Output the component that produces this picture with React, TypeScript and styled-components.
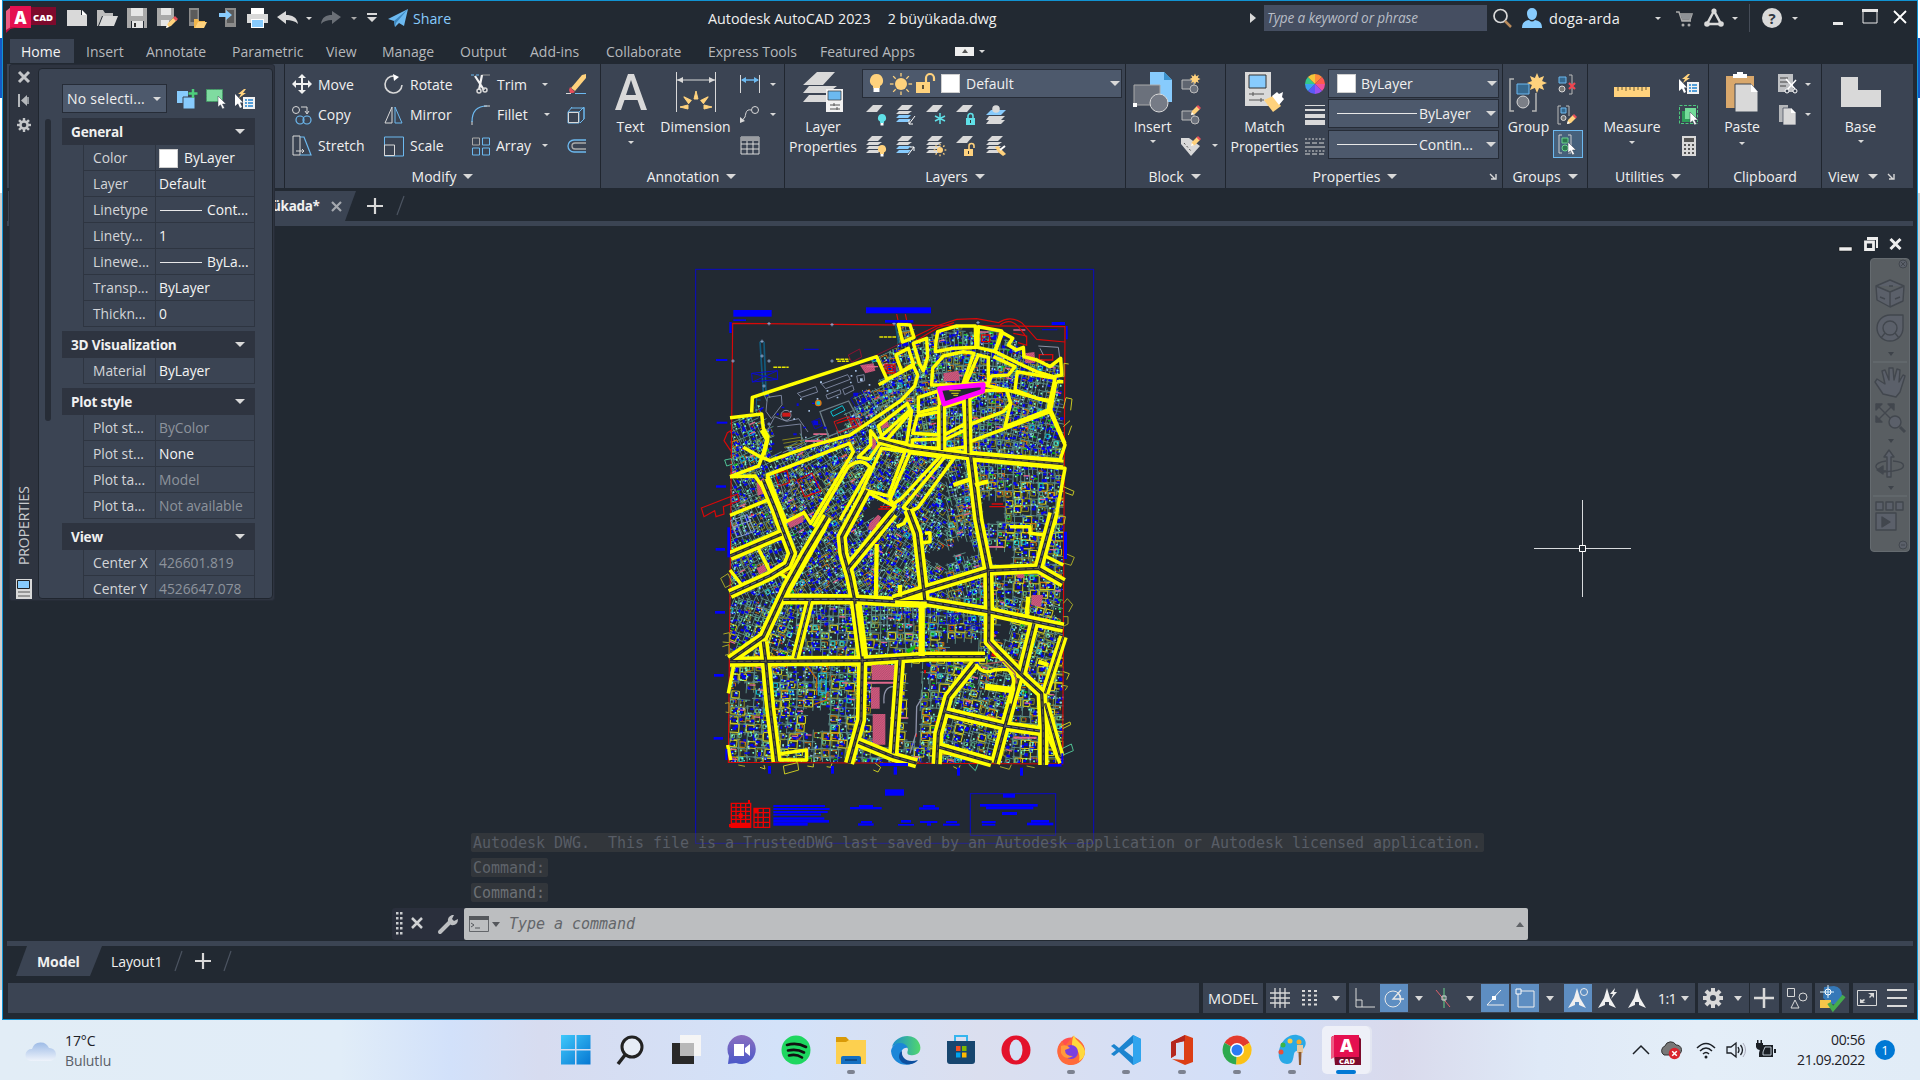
import React from "react";
import styled, { createGlobalStyle, css } from "styled-components";

const ui = `"Open Sans", "Noto Sans", sans-serif`;
const mono = `"DejaVu Sans Mono", "Liberation Mono", monospace`;
const c = {
  dark: "#222932",
  panel: "#3b4453",
  field: "#4d596c",
  line: "#262c37",
  frame: "#2e3440",
  icon: "#d9d9d9",
  blue: "#87cbfd",
  sky: "#6cb9f0",
  gold: "#ffd27d",
  red: "#e84e5a",
  green: "#6bd38e",
};

const Global = createGlobalStyle`
  * { box-sizing: border-box; }
  html, body { margin: 0; padding: 0; overflow: hidden; background: #222932; }
  body { font-family: ${ui}; font-size: 14px; color: #f0f0f0; }
`;

/* ---------- shared pieces ---------- */

const Screen = styled.div`
  width: 1920px;
  height: 1080px;
  display: flex;
  flex-direction: column;
  overflow: hidden;
  white-space: nowrap;
`;
const Desk = styled.div`
  height: 1020px;
  padding: 0 2px 0 2px;
  background: linear-gradient(#fff 0 38px, #1559c4 38px 98px, #fff 98px 193px, #cfcfcf 193px 990px, #eef3f9 990px);
`;
const Window = styled.div`
  position: relative;
  height: 1020px;
  border: 1px solid #1193d3;
  background: ${c.dark};
  display: flex;
  flex-direction: column;
  padding: 0 4px;
`;
const Pic = styled.svg<{ $w: number; $h: number; $ml?: number }>`
  display: block;
  flex: none;
  width: ${(p) => p.$w}px;
  height: ${(p) => p.$h}px;
  margin-left: ${(p) => p.$ml ?? 0}px;
  overflow: visible;
`;
type IconProps = { s?: number; w?: number; h?: number; ml?: number; vb?: string; children?: React.ReactNode };
const Icon = ({ s = 20, w, h, ml, vb, children }: IconProps) => (
  <Pic $w={w ?? s} $h={h ?? s} $ml={ml} viewBox={vb ?? `0 0 ${w ?? s} ${h ?? s}`} fill="none">
    {children}
  </Pic>
);
const Caret = styled.i<{ $w?: number; $ml?: number; $mt?: number; $c?: string; $up?: boolean }>`
  display: block;
  flex: none;
  width: 0;
  height: 0;
  margin-left: ${(p) => p.$ml ?? 0}px;
  margin-top: ${(p) => p.$mt ?? 0}px;
  border-left: ${(p) => (p.$w ?? 7) / 2}px solid transparent;
  border-right: ${(p) => (p.$w ?? 7) / 2}px solid transparent;
  ${(p) =>
    p.$up
      ? css`border-bottom: ${(p.$w ?? 7) * 0.58}px solid ${p.$c ?? c.icon};`
      : css`border-top: ${(p.$w ?? 7) * 0.58}px solid ${p.$c ?? c.icon};`}
`;

/* ---------- title bar ---------- */

const TitleBar = styled.header`
  height: 37px;
  display: flex;
  align-items: center;
  padding-bottom: 3px;
  flex: none;
`;
const Logo = styled.div`
  width: 51px;
  height: 28px;
  margin: 2px 0 0 -1px;
  flex: none;
`;
const QuickBar = styled.div`
  display: flex;
  align-items: center;
  width: 651px;
  flex: none;
`;
const ShareText = styled.span`
  color: ${c.blue};
  font-size: 14.2px;
  margin-left: 5px;
`;
const Caption = styled.div`
  display: flex;
  gap: 17px;
  width: 540px;
  font-size: 14.3px;
`;
const Search = styled.div`
  width: 223px;
  height: 26px;
  margin-left: 8px;
  padding-left: 3px;
  background: #454e61;
  font-style: italic;
  font-size: 13.6px;
  letter-spacing: -0.14px;
  line-height: 25px;
  color: #b8bdc6;
`;
const User = styled.span`
  margin-left: 7px;
  width: 106px;
  font-size: 14.5px;
  letter-spacing: 0.2px;
`;
const Rule = styled.i`
  width: 1px;
  height: 28px;
  background: #454c58;
  margin-left: 11px;
`;

const Title = () => (
  <TitleBar>
    <Logo>
      <Icon w={51} h={28}>
        <path d="M5 2h45v18H24z" fill="#7d0a2c" />
        <path d="M0 6l5-4v21l-5 4z" fill="#ee5c83" />
        <path d="M4 1h21v22H4z" fill="#e51050" />
        <path d="M0 25l5-3h8L4 24l-4 4z" fill="#c00c44" />
        <text x="14.5" y="19" fontSize="17" fontWeight="800" fill="#fff" textAnchor="middle" fontFamily="Open Sans">A</text>
        <text x="37" y="15.5" fontSize="9.5" fontWeight="800" fill="#fff" textAnchor="middle" fontFamily="Open Sans">CAD</text>
      </Icon>
    </Logo>
    <QuickBar>
      <Icon w={20} h={18} ml={10}><path d="M0 1h14v5h6v11H0z" fill={c.icon} /><path d="M15 1l5 5h-5z" fill="#fff" /></Icon>
      <Icon w={21} h={18} ml={10}><path d="M0 17V1h6l2 3h8v3H5L1 17z" fill="#bdbdbd" /><path d="M2 17L6 7h15l-4 10z" fill={c.icon} /></Icon>
      <Icon s={20} ml={9}><path d="M0 0h4v8h12V0h4v20h-3v-7H4v7H0z" fill="#a9a9a9" /><path d="M4 0h12v8H4zM5 13h11v7H5z" fill="#e6e6e6" /><path d="M7 15h2v4H7z" fill="#333" /></Icon>
      <Icon s={20} ml={10}><path d="M0 0h4v7h10V0h3v9L8 18H0z" fill="#a9a9a9" /><path d="M4 0h10v7H4zM4 12h8v6H4z" fill="#e6e6e6" /><path d="M9 20l2-5 6-6 3 3-6 6z" fill={c.gold} /><path d="M16 10l2-2 3 3-2 2z" fill={c.red} /><path d="M9 20l1-3 2 2z" fill="#fff" /></Icon>
      <Icon s={20} ml={10}><path d="M2 0h10v18H2z" fill="#8b8b8b" /><path d="M3.500 2h7v12h-7z" fill="#5b5b5b" /><path d="M7 20v-9h4l1 2h6v2l-3 5z" fill="#f0b64d" /><path d="M8 20l3-6h9l-3 6z" fill={c.gold} /></Icon>
      <Icon s={20} ml={12}><path d="M6 0h11v19H6z" fill="#8b8b8b" /><path d="M8 2h7v13H8z" fill="#5b5b5b" /><path d="M0 5h7V2l6 5-6 5V9H0z" fill={c.blue} /></Icon>
      <Icon w={21} h={20} ml={8}><path d="M4 0h13v6H4z" fill="#fff" /><path d="M0 6h21v9H0z" fill={c.icon} /><path d="M4 11h13v9H4z" fill="#fff" /><path d="M5 12h11v7H5z" fill={c.blue} /></Icon>
      <Icon w={21} h={14} ml={9}><path d="M0 6l9-6v4c6 0 11 2 12 9-3-3-7-4-12-4v4z" fill={c.icon} /></Icon>
      <Caret $ml={8} $w={6} />
      <Icon w={20} h={14} ml={9}><path d="M20 6l-9-6v4C5 4 1 6 0 13c3-3 6-4 11-4v4z" fill="#6a6f76" /></Icon>
      <Caret $ml={10} $w={6} $c="#aaa" />
      <Icon w={10} h={10} ml={10}><path d="M0 0h10v2H0zM0 4h10l-5 5z" fill={c.icon} /></Icon>
      <Icon w={20} h={18} ml={11}><path d="M0 10L20 0l-4 17-5-3-4 4-1-6z" fill={c.sky} /><path d="M6 12L20 0 8 14l-1 4z" fill="#3c86be" /></Icon>
      <ShareText>Share</ShareText>
    </QuickBar>
    <Caption><span>Autodesk AutoCAD 2023</span><span>2 büyükada.dwg</span></Caption>
    <Icon w={6} h={10} ml={2}><path d="M0 0l6 5-6 5z" fill={c.icon} /></Icon>
    <Search>Type a keyword or phrase</Search>
    <Icon s={20} ml={6}><circle cx="7.500" cy="8" r="6.500" stroke={c.icon} strokeWidth="1.700" /><path d="M12 13l6 6" stroke="#b98b5c" strokeWidth="2.500" /></Icon>
    <Icon s={20} ml={9}><path d="M5 5a5 5 0 0 1 10 0c0 4-2 7-5 7s-5-3-5-7zM0 20c0-5 2-7 7-8 2 2 4 2 6 0 5 1 7 3 7 8z" fill={c.blue} /></Icon>
    <User>doga-arda</User>
    <Caret $w={6} />
    <Icon s={17} ml={15}><path d="M0 2h3l3 9h9M4 4h12l-2 6H6" stroke="#aaa" strokeWidth="1.500" /><path d="M4 4h12l-2 5H6z" fill="#8f9296" /><circle cx="7" cy="15" r="1.500" fill="#aaa" /><circle cx="13" cy="15" r="1.500" fill="#aaa" /></Icon>
    <Icon s={20} ml={11}><path d="M10 3L3 16h14z" stroke={c.icon} strokeWidth="2.500" /><circle cx="10" cy="3" r="2.600" fill={c.icon} /><circle cx="3" cy="16" r="2.800" fill={c.icon} /><circle cx="17" cy="16" r="2.800" fill={c.icon} /></Icon>
    <Caret $w={6} $ml={8} />
    <Rule />
    <Icon s={20} ml={12}><circle cx="10" cy="10" r="10" fill={c.icon} /><text x="10" y="15.500" fontSize="15" fontWeight="700" fill="#30363f" textAnchor="middle" fontFamily="Open Sans">?</text></Icon>
    <Caret $w={6} $ml={10} />
    <Icon w={11} h={16} ml={35}><path d="M0 12h10v3H0z" fill="#e8e8e8" /></Icon>
    <Icon w={16} h={16} ml={18}><path d="M1 0h14v13H1z" stroke="#e8e8e8" /><path d="M0-1h16v3H0z" fill="#e8e8e8" /></Icon>
    <Icon w={14} h={14} ml={15}><path d="M1 0l12 12M13 0L1 12" stroke="#fff" strokeWidth="1.800" /></Icon>
  </TitleBar>
);

/* ---------- ribbon ---------- */

const MenuBar = styled.nav`
  height: 26px;
  display: flex;
  align-items: center;
  flex: none;
  padding-left: 3px;
  color: #b5b8bc;
`;
const MenuTab = styled.div<{ $w: number; $on?: boolean }>`
  width: ${(p) => p.$w}px;
  height: 24px;
  line-height: 25px;
  flex: none;
  ${(p) => p.$on && css`background: ${c.panel}; color: #f4f4f4; padding-left: 11px; margin-right: 12px;`}
`;
const MiniBox = styled.div`
  width: 19px;
  height: 9px;
  margin-left: 1px;
  background: #eee;
  display: flex;
  align-items: center;
  justify-content: center;
`;
const menu: [string, number][] = [["Insert", 60], ["Annotate", 86], ["Parametric", 94], ["View", 56], ["Manage", 78], ["Output", 70], ["Add-ins", 76], ["Collaborate", 102], ["Express Tools", 112], ["Featured Apps", 134]];

const RibbonBar = styled.section`
  height: 124px;
  display: flex;
  flex: none;
  background: ${c.panel};
`;
const Panel = styled.div<{ $w: number; $last?: boolean }>`
  width: ${(p) => p.$w}px;
  flex: none;
  display: flex;
  flex-direction: column;
  border-right: ${(p) => (p.$last ? 0 : 1)}px solid #20262f;
`;
const Body = styled.div<{ $pl?: number }>`
  height: 101px;
  display: flex;
  padding: 5px 0 0 ${(p) => p.$pl ?? 0}px;
`;
const Foot = styled.div<{ $pr?: number }>`
  height: 23px;
  display: flex;
  align-items: center;
  justify-content: center;
  gap: 7px;
  padding-right: ${(p) => p.$pr ?? 0}px;
  position: relative;
`;
const Launcher = styled.span<{ $r?: number }>`
  position: absolute;
  right: ${(p) => p.$r ?? 5}px;
  top: 8px;
`;
const Col = styled.div<{ $w: number; $ml?: number }>`
  width: ${(p) => p.$w}px;
  margin-left: ${(p) => p.$ml ?? 0}px;
  flex: none;
  display: grid;
  grid-template-rows: 30px 31px 31px;
  align-content: start;
`;
const Tool = styled.div<{ $gap?: number }>`
  display: flex;
  align-items: center;
  gap: ${(p) => p.$gap ?? 6}px;
`;
const Big = styled.div<{ $w: number }>`
  width: ${(p) => p.$w}px;
  flex: none;
  display: flex;
  flex-direction: column;
  align-items: center;
  padding-top: 3px;
  line-height: 20px;
  text-align: center;
`;
const Glyph = styled.div`
  height: 40px;
  margin-bottom: 5px;
  display: flex;
  align-items: center;
`;
const Drop = styled.div<{ $w: number }>`
  width: ${(p) => p.$w}px;
  height: 29px;
  display: flex;
  align-items: center;
  background: ${c.field};
  border: 1px solid ${c.line};
`;
const Fill = styled.span`
  flex: 1;
`;
const Swatch = styled.i<{ $mr: number; $ml?: number }>`
  width: 19px;
  height: 19px;
  flex: none;
  background: #fff;
  border: 1px solid #cfcfcf;
  margin: 0 ${(p) => p.$mr}px 0 ${(p) => p.$ml ?? 0}px;
`;
const Stroke = styled.i<{ $w: number; $ml?: number; $mr?: number }>`
  width: ${(p) => p.$w}px;
  height: 1px;
  flex: none;
  background: #e8e8e8;
  margin-left: ${(p) => p.$ml ?? 0}px;
  margin-right: ${(p) => p.$mr ?? 0}px;
`;
const Picked = styled.div`
  width: 30px;
  height: 28px;
  margin-left: -5px;
  display: flex;
  align-items: center;
  justify-content: center;
  border: 1px solid ${c.sky};
  background: #46617c;
`;

const Cursor = ({ x = 0, y = 0 }: { x?: number; y?: number }) => (
  <path transform={`translate(${x} ${y})`} d="M0 0v11l2.500-2.200 2 4.200 2-1-2-4h3.500z" fill="#fff" stroke="#3b4453" strokeWidth=".5" />
);
const Pencil = ({ x = 0, y = 0 }: { x?: number; y?: number }) => (
  <g transform={`translate(${x} ${y})`}><path d="M0 10l1-4 5-5 3 3-5 5z" fill={c.gold} /><path d="M5.500 1.500L7 0l3 3-1.500 1.500z" fill={c.red} /><path d="M0 10l.8-3 2.200 2.200z" fill="#fff" /></g>
);
const Bulb = ({ x, y, f = "#5fe0e8" }: { x: number; y: number; f?: string }) => (
  <g transform={`translate(${x} ${y})`}><path d="M4 0a4 4 0 0 1 2 7.500V9H2V7.500A4 4 0 0 1 4 0z" fill={f} /><path d="M2.500 9h3v2.500h-3z" fill="#fff" /></g>
);
const Sheet = () => <path d="M0 7L7 0h10l-6 7z" fill={c.icon} />;
const Stack = ({ blue = false }: { blue?: boolean }) => (
  <>
    <path d="M0 17l3-3h12l-3 3zM0 13l3-3h12l-3 3z" fill={blue ? c.blue : c.icon} />
    <path d="M0 9l3-3h13l-4 3zM1 5l5-5h11l-5 5z" fill={c.icon} />
  </>
);
const Lock = ({ x, y, f, open }: { x: number; y: number; f: string; open?: boolean }) => (
  <g transform={`translate(${x} ${y})`}><path d={open ? "M5 5V2a2.500 2.500 0 0 1 5 0v2" : "M2 5V3a2.500 2.500 0 0 1 5 0v2"} stroke={f} strokeWidth="1.600" /><path d="M0 5h9v7H0z" fill={f} /><path d="M4 7h1v3H4z" fill="#333" /></g>
);
const Sun = ({ x, y, r = 3.5 }: { x: number; y: number; r?: number }) => (
  <g transform={`translate(${x} ${y})`}>
    <circle r={r} fill={c.gold} />
    {[0, 45, 90, 135, 180, 225, 270, 315].map((a) => <path key={a} transform={`rotate(${a})`} d={`M0 ${-r - 1.5}v${-r * 0.6}`} stroke={c.gold} strokeWidth="1.300" />)}
  </g>
);
const SelectList = () => (
  <Icon s={20}><path d="M0 5v12l3-2.500 2 4.500 2-1-2-4.500h3z" fill="#fff" /><path d="M9 0L3 5h3L4 9l7-5H8l3-4z" fill={c.gold} /><path d="M8 8h12v12H8z" fill="#f2f2f2" /><path d="M10 11h2M10 14h2M10 17h2M13 11h5M13 14h5M13 17h5" stroke="#1f82d0" strokeWidth="1.400" /></Icon>
);
const Star = ({ x, y, r }: { x: number; y: number; r: number }) => {
  const pts = Array.from({ length: 16 }, (_, i) => {
    const a = (i * Math.PI) / 8;
    const k = i % 2 ? r * 0.55 : r;
    return `${(x + k * Math.sin(a)).toFixed(1)},${(y - k * Math.cos(a)).toFixed(1)}`;
  }).join(" ");
  return <polygon points={pts} fill={c.gold} />;
};
const Mark = () => <Icon w={7} h={7}><path d="M0 1l5 5M6 1v5H1" stroke={c.icon} strokeWidth="1.400" /></Icon>;

const Ribbon = () => (
  <RibbonBar>
    <Panel $w={278} />
    <Panel $w={316}>
      <Body $pl={7}>
        <Col $w={92}>
          <Tool><Icon s={20}><path d="M10 0l4 4h-3v5h5V6l4 4-4 4v-3h-5v5h3l-4 4-4-4h3v-5H4v3l-4-4 4-4v3h5V4H6z" fill="#f0f0f0" /></Icon>Move</Tool>
          <Tool><Icon s={20}><circle cx="4" cy="5" r="3.500" stroke={c.icon} /><path d="M9 2h6v6m-2-2l2 3 2-3" stroke={c.icon} /><circle cx="8" cy="15" r="4" stroke={c.sky} strokeWidth="1.200" /><circle cx="15" cy="15" r="4" stroke={c.sky} strokeWidth="1.200" /></Icon>Copy</Tool>
          <Tool><Icon s={20}><path d="M8 0H1v19h7zM4 15h8m-2-2l2 2-2 2" stroke={c.icon} /><path d="M8 1h4l7 18H8" stroke={c.sky} strokeWidth="1.200" /></Icon>Stretch</Tool>
        </Col>
        <Col $w={87}>
          <Tool><Icon s={20}><path d="M10 2a8.500 8.500 0 1 0 8 9" stroke={c.icon} strokeWidth="1.600" /><path d="M9 0l6 3-5 4z" fill="#fff" /></Icon>Rotate</Tool>
          <Tool><Icon s={20}><path d="M8 2v16H1z" stroke={c.icon} /><path d="M11 2v16h7z" stroke={c.sky} /></Icon>Mirror</Tool>
          <Tool><Icon s={20}><path d="M.5 1h19v19H.5z" stroke={c.sky} /><path d="M.5 9h10v10.500H.5z" stroke={c.icon} /></Icon>Scale</Tool>
        </Col>
        <Col $w={95}>
          <Tool><Icon s={20}><path d="M0 1h9" stroke={c.sky} strokeDasharray="3 2" /><path d="M11 1h8" stroke="#999" /><path d="M4 2l9 14M11 1L8 16" stroke="#f2f2f2" strokeWidth="2.200" /><circle cx="8" cy="17" r="2" stroke={c.icon} strokeWidth="1.500" /><circle cx="14" cy="16" r="2" stroke={c.icon} strokeWidth="1.500" /></Icon>Trim<Caret $ml={9} $w={6} /></Tool>
          <Tool><Icon s={20}><path d="M1 20v-4" stroke={c.icon} /><path d="M1 17C1 6 6 1 16 1" stroke={c.sky} strokeWidth="1.200" /><path d="M13 1h6" stroke={c.icon} /></Icon>Fillet<Caret $ml={10} $w={6} /></Tool>
          <Tool><Icon s={18} ml={1}><path d="M.5 1h7v7h-7z" stroke="#aaa" /><path d="M10.500 1h7v7h-7zM.5 11h7v7h-7zM10.500 11h7v7h-7z" stroke={c.sky} /></Icon>Array<Caret $ml={5} $w={6} /></Tool>
        </Col>
        <Col $w={20}>
          <Tool><Icon s={20}><path d="M5 14L16 1l4-1v4L9 17z" fill={c.gold} /><path d="M4 13l5 5-2 1H4l-1-3z" fill={c.red} /><path d="M0 19.500h5" stroke={c.icon} /><path d="M9 19.500h11" stroke={c.sky} /></Icon></Tool>
          <Tool><Icon s={20}><path d="M2 7h11v11H2zM5 3h13v11l-4 4M2 7l4-5M13 7l5-5v12" stroke={c.sky} /><path d="M2.500 7.500h10v10h-10z" stroke={c.icon} /></Icon></Tool>
          <Tool><Icon s={20}><path d="M20 4H8a6 6 0 0 0 0 12h12" stroke={c.sky} strokeWidth="1.300" /><path d="M20 7H9a3 3 0 0 0 0 6h11" stroke="#aaa" strokeWidth="1.300" /></Icon></Tool>
        </Col>
      </Body>
      <Foot>Modify<Caret $w={10} /></Foot>
    </Panel>
    <Panel $w={184}>
      <Body>
        <Big $w={59}>
          <Glyph><Icon w={32} h={36}><path d="M0 36L13 0h6l13 36h-6l-3.500-10h-13L6 36zM11 21h10L16 6z" fill={c.icon} /></Icon></Glyph>
          Text<Caret $w={6} $mt={4} />
        </Big>
        <Big $w={71}>
          <Glyph><Icon s={40}><path d="M.5 0v40M39.500 0v40M1 8h38" stroke={c.icon} /><path d="M1 8l6-3v6zM39 8l-6-3v6z" fill={c.icon} />{[-90, -50, 0, 50, 90].map((a) => <path key={a} transform={`rotate(${a} 20 35)`} d="M18 27l2-8 2 8z" fill={c.gold} stroke={c.gold} />)}</Icon></Glyph>
          Dimension
        </Big>
        <Col $w={40} $ml={9}>
          <Tool $gap={10}><Icon s={20}><path d="M.5 1v18M19.500 1v18" stroke={c.icon} /><path d="M2 6h16" stroke={c.sky} strokeWidth="1.500" /><path d="M1 6l5-3v6zM19 6l-5-3v6z" fill={c.sky} /></Icon><Caret $w={6} /></Tool>
          <Tool $gap={10}><Icon s={20}><circle cx="15" cy="5" r="3.500" stroke={c.icon} /><path d="M11 5C6 4 6 8 5 12l-4 5" stroke={c.icon} /><path d="M0 18v-6l5 4z" fill={c.icon} /></Icon><Caret $w={6} /></Tool>
          <Tool><Icon s={20}><path d="M1 1h18v17H1zM1 8h18M1 13h18M7 5v13M13 5v13" stroke={c.icon} /><path d="M1 1h18v4H1z" fill="#9a9da2" /></Icon></Tool>
        </Col>
      </Body>
      <Foot $pr={2}>Annotation<Caret $w={10} /></Foot>
    </Panel>
    <Panel $w={341}>
      <Body>
        <Big $w={76}>
          <Glyph><Icon s={40}><path d="M0 30l6-7h22l-5 7zM0 21l6-7h28l-9 7zM0 13L14 0h18L20 13z" fill={c.icon} /><path d="M23 17h17v23H23z" fill="#f2f2f2" /><path d="M25 19h13v9H25z" fill={c.sky} stroke="#333" strokeWidth=".7" /><path d="M27 33h10M27 37h10M31 31v3M34 35v3" stroke="#555" /></Icon></Glyph>
          Layer<br />Properties
        </Big>
        <Col $w={260} $ml={1}>
          <Drop $w={260}>
            <Icon w={13} h={20} ml={7}><path d="M6.500 0a6.500 6.500 0 0 1 3.500 12v2H3v-2A6.500 6.500 0 0 1 6.500 0z" fill={c.gold} /><path d="M3.500 14h6v4h-6z" fill="#fff" /></Icon>
            <Icon s={20} ml={8}><Sun x={10} y={10} r={6} /></Icon>
            <Icon s={20} ml={5}><path d="M10 8V4a4 4 0 0 1 8 0v3" stroke={c.gold} strokeWidth="2.200" /><path d="M0 8h14v11H0z" fill={c.gold} /><path d="M6 11h2v4H6z" fill="#5d5138" /></Icon>
            <Swatch $ml={5} $mr={6} /><Fill>Default</Fill><Caret $w={10} /><Icon w={1} h={1} />
          </Drop>
          <Tool $gap={10}>
            <Icon s={20} ml={4}><Sheet /><Bulb x={12} y={9} /></Icon>
            <Icon s={20}><Stack blue /><path d="M19 11l-6 8m0-4v4h4" stroke="#fff" /></Icon>
            <Icon s={20}><Sheet /><path d="M14 8v11M9 11l10 5M9 16l10-5" stroke="#5fe0e8" strokeWidth="1.500" /></Icon>
            <Icon s={20}><Sheet /><Lock x={10} y={8} f="#5fe0e8" /></Icon>
            <Icon s={20}><path d="M0 19l3-4h16l-4 4zM0 15l3-4h16l-4 4z" fill={c.icon} /><path d="M0 10l5-5h15l-5 5z" fill={c.blue} /><circle cx="10" cy="4" r="3.800" fill={c.icon} /></Icon>
          </Tool>
          <Tool $gap={10}>
            <Icon s={20} ml={4}><Stack /><Bulb x={12} y={9} f={c.gold} /></Icon>
            <Icon s={20}><Stack blue /><path d="M12 19l6-8m0 4v-4h-4" stroke="#fff" /></Icon>
            <Icon s={20}><Stack /><Sun x={14} y={14} r={3} /></Icon>
            <Icon s={20}><Sheet /><Lock x={8} y={8} f={c.gold} open /></Icon>
            <Icon s={20}><Stack /><path d="M9 11l3-1 8 8-3 2-5-4z" fill={c.gold} /><path d="M14 14l5-4" stroke="#fff" strokeWidth="2" /></Icon>
          </Tool>
        </Col>
      </Body>
      <Foot>Layers<Caret $w={10} /></Foot>
    </Panel>
    <Panel $w={100}>
      <Body>
        <Big $w={53}>
          <Glyph><Icon s={40}><path d="M17 0h14l8 8v22H17z" fill={c.blue} /><path d="M31 0l8 8h-8z" fill="#3b93cf" /><path d="M1 13h26v20H1z" fill="#6b717c" stroke="#aaa" /><circle cx="26" cy="31" r="9" fill="#767b86" stroke={c.icon} /><path d="M0 31h4v4H0z" fill="#fff" /></Icon></Glyph>
          Insert<Caret $w={6} $mt={3} />
        </Big>
        <Col $w={40} $ml={2}>
          <Tool><Icon s={20}><path d="M1 6h12v9H1z" fill="#5f6570" stroke="#bbb" /><circle cx="13" cy="15" r="4" fill="#6b717c" stroke="#bbb" /><Star x={14} y={5} r={5.5} /></Icon></Tool>
          <Tool><Icon s={20}><path d="M1 6h12v9H1z" fill="#5f6570" stroke="#bbb" /><circle cx="14" cy="15" r="4" fill="#6b717c" stroke="#bbb" /><Pencil x={10} y={0} /></Icon></Tool>
          <Tool $gap={11}><Icon s={20}><path d="M0 2h8l11 8-9 10L0 8z" fill={c.icon} /><path d="M3 7l7 8" stroke="#555" strokeDasharray="2 2" /><Pencil x={10} y={0} /></Icon><Caret $w={6} /></Tool>
        </Col>
      </Body>
      <Foot $pr={2}>Block<Caret $w={10} /></Foot>
    </Panel>
    <Panel $w={277}>
      <Body>
        <Big $w={77}>
          <Glyph><Icon s={40}><path d="M0 0h26v34H0z" fill={c.icon} /><path d="M4 3h17v13H4z" fill={c.blue} stroke="#333" /><path d="M4 22h15M4 28h15M8 20v4M16 26v4" stroke="#555" /><path d="M19 28l9-4 8 10-8 6z" fill={c.gold} /><path d="M27 24l5-4 2 2 4-2-1 5 2 2-5 6z" fill="#fff" /></Icon></Glyph>
          Match<br />Properties
        </Big>
        <Col $w={23} $ml={2}>
          <Tool><Icon s={20}>{["#ff8c3a", "#ff5a4e", "#f0509a", "#9a52f0", "#5a5af5", "#3aa3f2", "#35c98a", "#f5c63a"].map((f, i) => <path key={f} transform={`rotate(${i * 45} 10 10)`} d="M10 10V0a10 10 0 0 1 7.070 2.930z" fill={f} />)}</Icon></Tool>
          <Tool><Icon s={20}><path d="M0 .5h20" stroke={c.icon} /><path d="M0 5h20" stroke={c.icon} strokeWidth="2" /><path d="M0 11h20" stroke={c.icon} strokeWidth="4" /><path d="M0 17.500h20" stroke={c.icon} strokeWidth="5" /></Icon></Tool>
          <Tool><Icon s={20}><path d="M0 3h20M0 15h20" stroke={c.icon} strokeDasharray="2 1.500" /><path d="M0 7h20M0 18h20" stroke={c.icon} strokeDasharray="5 2" /><path d="M0 11h20" stroke={c.icon} /></Icon></Tool>
        </Col>
        <Col $w={171}>
          <Drop $w={171}><Swatch $ml={8} $mr={5} /><Fill>ByLayer</Fill><Caret $w={10} $ml={-1} /><Icon w={1} h={1} /></Drop>
          <Drop $w={171}><Stroke $w={80} $ml={8} $mr={2} /><Fill>ByLayer</Fill><Caret $w={10} /><Icon w={2} h={1} /></Drop>
          <Drop $w={171}><Stroke $w={80} $ml={8} $mr={2} /><Fill>Contin...</Fill><Caret $w={10} /><Icon w={2} h={1} /></Drop>
        </Col>
      </Body>
      <Foot $pr={18}>Properties<Caret $w={10} /><Launcher><Mark /></Launcher></Foot>
    </Panel>
    <Panel $w={85}>
      <Body>
        <Big $w={51}>
          <Glyph><Icon s={40}><path d="M5 7H1v32h4M23 39h4V21" stroke="#b5b5b5" strokeWidth="1.500" /><path d="M8 12h12v10H8z" fill="#36698f" stroke={c.sky} /><circle cx="14" cy="30" r="6" fill="#7b7f87" stroke={c.icon} /><Star x={28} y={11} r={10} /></Icon></Glyph>
          Group
        </Big>
        <Col $w={30} $ml={4}>
          <Tool><Icon s={18}><path d="M1 2h7v6H1z" fill="#36698f" stroke={c.sky} /><circle cx="4" cy="14" r="3" fill="#777" stroke={c.icon} /><path d="M11 0h3v19h-3" stroke="#bbb" /><path d="M11 8l6 6m0-6l-6 6" stroke="#f0454f" strokeWidth="2.200" /></Icon></Tool>
          <Tool><Icon s={18}><path d="M3 0H0v18h3M8 0h3v10" stroke="#bbb" /><path d="M3 2h5v5H3z" fill="#36698f" stroke={c.sky} /><circle cx="5.500" cy="12" r="2.500" fill="#777" stroke={c.icon} /><Pencil x={9} y={8} /></Icon></Tool>
          <Picked><Icon s={18}><path d="M3 0H0v18h3M9 0h3v18h-3" stroke="#ccc" /><path d="M3 3h6v5H3z" fill="#2d7a50" stroke={c.green} /><circle cx="6" cy="13" r="3" fill="#2d7a50" stroke={c.green} /><Cursor x={9} y={7} /></Icon></Picked>
        </Col>
      </Body>
      <Foot>Groups<Caret $w={10} /></Foot>
    </Panel>
    <Panel $w={121}>
      <Body>
        <Big $w={88}>
          <Glyph><Icon w={36} h={10}><path d="M0 0h36v10H0z" fill={c.gold} /><path d="M4 0v4M8 0v3M12 0v4M16 0v3M20 0v4M24 0v3M28 0v4M32 0v3" stroke="#6b5a35" /></Icon></Glyph>
          Measure<Caret $w={6} $mt={4} />
        </Big>
        <Col $w={20} $ml={3}>
          <Tool><SelectList /></Tool>
          <Tool><Icon s={20}><path d="M.5.5h18v18H.5z" stroke="#4dc77d" strokeDasharray="3 1.500" /><path d="M3 6h11v11H3z" fill="#2f9d5a" /><path d="M6 3h11v11H6z" fill="#74dc9a" /><Cursor x={11} y={7} /></Icon></Tool>
          <Tool><Icon w={14} h={20} ml={3}><path d="M0 0h14v20H0z" fill={c.icon} /><path d="M2 2h10v4H2z" fill="#555" />{[8, 12, 16].map((y) => <path key={y} d={`M2 ${y}h2v2H2zM6 ${y}h2v2H6zM10 ${y}h2v2h-2z`} fill="#555" />)}</Icon></Tool>
        </Col>
      </Body>
      <Foot>Utilities<Caret $w={10} /></Foot>
    </Panel>
    <Panel $w={113}>
      <Body>
        <Big $w={66}>
          <Glyph><Icon w={32} h={40}><path d="M0 4h28v32H0z" fill="#d9a86c" /><path d="M7 2h4V0h6v2h4v4H7z" fill="#fff" /><path d="M9 12h16l7 8v20H9z" fill={c.icon} stroke="#3b4453" /><path d="M25 12l7 8h-7z" fill="#fff" /></Icon></Glyph>
          Paste<Caret $w={6} $mt={5} />
        </Big>
        <Col $w={36} $ml={3}>
          <Tool $gap={7}><Icon s={20}><path d="M0 0h15v18H0z" fill="#bfc1c4" /><path d="M2 4h8M2 8h8M2 12h6" stroke="#444" /><path d="M8 5l9 10M18 6L9 16" stroke="#fff" strokeWidth="1.500" /><circle cx="9" cy="17" r="2" stroke="#fff" fill="#3b4453" /><circle cx="17" cy="17" r="2" stroke="#fff" fill="#3b4453" /></Icon><Caret $w={6} /></Tool>
          <Tool $gap={7}><Icon s={20}><path d="M1 0h9v3H5v14H1z" fill="#b5b7ba" /><path d="M5 3h8l5 5v12H5z" fill={c.icon} stroke="#3b4453" strokeWidth=".7" /><path d="M13 3l5 5h-5z" fill="#fff" /></Icon><Caret $w={6} /></Tool>
        </Col>
      </Body>
      <Foot>Clipboard</Foot>
    </Panel>
    <Panel $w={93} $last>
      <Body>
        <Big $w={77}><Glyph><Icon w={40} h={30}><path d="M0 0h17v13h23v17H0z" fill={c.icon} /></Icon></Glyph>Base<Caret $w={6} $mt={3} /></Big>
      </Body>
      <Foot $pr={31}>View<Caret $w={10} $ml={2} /><Launcher $r={20}><Mark /></Launcher></Foot>
    </Panel>
  </RibbonBar>
);

/* ---------- file tabs ---------- */

const FileTabs = styled.div`
  height: 33px;
  padding: 3px 0 0 1px;
  display: flex;
  flex: none;
`;
const FileTab = styled.div`
  width: 348px;
  height: 30px;
  padding-left: 264px;
  background: ${c.panel};
  clip-path: polygon(0 0, 100% 0, calc(100% - 11px) 100%, 0 100%);
  font-weight: 700;
  font-size: 13.5px;
  line-height: 30px;
  display: flex;
  align-items: center;
  letter-spacing: -0.3px;
`;
const Band = styled.i`
  display: block;
  height: 5px;
  flex: none;
  background: ${c.panel};
`;

/* ---------- city plan drawing ---------- */

type P = [number, number];
const inside = (x: number, y: number, poly: P[]) => {
  let r = false;
  for (let i = 0, j = poly.length - 1; i < poly.length; j = i++) {
    const [xi, yi] = poly[i];
    const [xj, yj] = poly[j];
    if (yi > y !== yj > y && x < ((xj - xi) * (y - yi)) / (yj - yi) + xi) r = !r;
  }
  return r;
};
const town: P[] = [[152, 478], [245, 466], [262, 600], [217, 414], [590, 292], [652, 262], [652, 196], [700, 196], [712, 240], [775, 214], [830, 198], [965, 212], [1000, 236], [1075, 296], [1145, 305], [1156, 560], [1152, 620], [1150, 1510], [148, 1505]];
const harbour: P[] = [[225, 418], [585, 300], [620, 360], [520, 410], [500, 520], [280, 590], [255, 500]];
const voids: P[][] = [
  [[675, 1215], [740, 1215], [725, 1320], [705, 1480], [670, 1400], [655, 1400]],
  [[385, 1345], [450, 1335], [450, 1415], [385, 1415]],
  [[160, 1265], [235, 1280], [235, 1335], [190, 1330]],
  [[800, 1140], [905, 1140], [905, 1175], [810, 1185]],
  [[565, 1210], [650, 1210], [640, 1460], [570, 1440]],
  [[760, 860], [870, 840], [900, 890], [760, 910]],
  [[900, 720], [975, 700], [985, 780], [905, 775]],
  [[570, 700], [650, 745], [620, 790], [550, 790]],
  [[930, 860], [990, 860], [985, 905], [930, 910]],
  [[945, 1060], [1010, 1080], [990, 1140], [950, 1120]],
];
const tilt = (x: number, y: number) => {
  if (y < 560) return x < 620 ? -0.42 : x < 800 ? -0.2 : x > 960 ? 0.22 : 0.05;
  if (y < 1000) return x < 330 ? -0.45 : x < 560 ? -0.55 : x < 780 ? 0.55 : x < 900 ? -0.28 : 0.03;
  if (y < 1200) return x < 330 ? 0.35 : x > 930 ? 0.28 : 0.04;
  return x > 780 && x < 1000 ? 0.25 : 0.06;
};
const buildPlan = () => {
  let seed = 9137;
  const rnd = () => {
    seed = (seed * 1664525 + 1013904223) >>> 0;
    return seed / 4294967296;
  };
  const d: Record<string, string> = {};
  const put = (k: string, s: string) => { d[k] = (d[k] ?? "") + s; };
  const step = 25;
  for (let y = 190; y < 1510; y += step)
    for (let x = 150; x < 1152; x += step) {
      if (!inside(x + 10, y + 10, town) || inside(x + 10, y + 10, harbour) || voids.some((v) => inside(x + 10, y + 10, v))) continue;
      const a = tilt(x, y);
      const ca = Math.cos(a);
      const sa = Math.sin(a);
      const jx = x + rnd() * 8 - 4;
      const jy = y + rnd() * 8 - 4;
      const at = (u: number, v: number) => `${(jx + u * ca - v * sa).toFixed(1)} ${(jy + u * sa + v * ca).toFixed(1)}`;
      const box = (u: number, v: number, w: number, h: number) => `M${at(u, v)}L${at(u + w, v)}L${at(u + w, v + h)}L${at(u, v + h)}Z`;
      const low = y > 1080 || (x > 900 && y > 640);
      put("parcel", `M${at(0, -4)}L${at(0, 34)}`);
      if (rnd() < 0.75) put("parcel", `M${at(-6, 0)}L${at(34, 0)}`);
      if (!low && rnd() < 0.9) put("parcel", `M${at(12, 0)}L${at(12, 28)}`);
      if (!low && rnd() < 0.4) put("slate", `M${at(0, 13)}L${at(26, 13)}`);
      if (rnd() < (low ? 0.4 : 0.25)) put("olive", box(4, 4, 12 + rnd() * 10, 10 + rnd() * 10));
      if (low && rnd() < 0.26) {
        const w = 18 + rnd() * 10;
        put("yellowBox", box(3, 3, w, w * 0.9));
        put("blue", box(3 + w * 0.32, 3 + w * 0.3, w * 0.4, w * 0.35));
      }
      const n = low ? 2 : 3;
      for (let i = 0; i < n; i++) if (rnd() < 0.72) put("blue", box(rnd() * 20, rnd() * 20, 4 + rnd() * 7, 4 + rnd() * 5));
      if (rnd() < 0.85) put("mint", box(rnd() * 20, rnd() * 20, 5, 5));
      if (rnd() < 0.4) put("mint", box(rnd() * 20, rnd() * 20, 4, 4));
      if (rnd() < 0.35) put("pale", box(rnd() * 20, rnd() * 20, 5, 5));
      if (rnd() < 0.28) put("mintBox", box(3, 5, 9, 10));
      if (rnd() < 0.07) put("cyan", box(3, 3, 12, 12));
      if (rnd() < 0.14) put("orange", `M${at(2, 4)}L${at(20, 4)}L${at(20, 14)}M${at(4, 20)}L${at(16, 20)}`);
      if (rnd() < 0.08) put("green", box(rnd() * 15, rnd() * 15, 9, 4));
      if (rnd() < 0.07) put("pink", box(rnd() * 9, rnd() * 9, 18, 4));
      if (rnd() < 0.12) put("red", box(rnd() * 18, rnd() * 18, 4, 4));
    }
  return d;
};
const plan = buildPlan();

const blocks = [
  "M215 458L217 412L590 290L622 360L596 374M622 358L700 318L713 345L704 378L665 420L580 478L510 525L400 556L270 602L240 590L190 562",
  "M150 473L245 462L250 505L264 530L250 580L236 618L150 650",
  "M655 193L690 195L702 232L668 246Z", "M648 285L685 265L700 312L665 335Z", "M700 250L740 235L743 290L730 332L718 310Z",
  "M768 245L773 215L830 198L886 198L888 262L820 265L766 275Z", "M895 200L965 213L945 275L893 262Z",
  "M968 218L998 235L985 255L1010 270L1030 262L1032 290L1070 300L1110 320L1142 295L1145 345L1120 350L1070 335L1020 312L945 275Z",
  "M755 375L758 325L790 288L850 275L882 280L870 312L848 374Z", "M895 285L925 292L925 370L857 372Z", "M940 290L1005 320L985 345L935 348L925 370",
  "M1012 335L1125 355L1110 422L1070 415L1005 390Z", "M1130 365L1150 365M1128 365L1112 450L1155 550",
  "M715 412L775 393L780 442L715 458Z", "M790 442L850 423L858 490L792 525Z", "M862 420L915 392L980 390L992 430L970 455L865 495Z",
  "M915 375L1000 395L1108 425L1105 450L975 500L992 430", "M865 577L870 545L1110 455L1155 555L1140 600Z", "M712 468L778 455L775 525L698 520Z",
  "M697 540L775 537L775 565L697 562Z", "M595 498L682 430L690 450L605 528Z", "M620 540L695 452L680 550Z", "M792 540L855 510L858 560L790 570Z",
  "M572 512L600 550L568 597L535 592L572 555Z", "M262 645L508 550L520 575L392 790L372 758L318 785Z", "M262 650L300 780",
  "M548 688L605 565L675 575L625 708Z", "M630 718L690 578L780 590L665 715L640 732Z", "M670 742L795 590L822 595L715 742L690 755Z",
  "M400 800L505 620Q545 590 570 622L480 780", "M880 600L1155 625L1125 790L1100 810", "M550 690L645 740L592 800M690 755L672 790L650 800",
  "M150 766L268 718M150 650L225 648L262 700", "M230 855L270 935M150 930L185 975", "M295 1482L380 1470L380 1500L300 1500Z",
  "M322 1005L500 1008M322 1005L438 800M322 955L300 940", "M1140 1510L1100 1420", "M990 800L1050 800L1050 820L1095 825",
  "M735 820L750 818L750 845L715 850", "M1090 885L1150 915", "M145 1300L162 1212M152 1500L143 1455",
];
const streets: P[][] = [
  [[150, 1002], [270, 947], [322, 915], [336, 880], [305, 800], [285, 745], [250, 660]],
  [[150, 888], [305, 822]],
  [[442, 770], [370, 890], [320, 980], [250, 1130], [150, 1200]],
  [[310, 1018], [520, 1018], [640, 1025], [740, 1025], [925, 1055], [1150, 1103]],
  [[640, 1020], [730, 990], [920, 932], [1075, 925], [1150, 968]],
  [[560, 690], [485, 830], [490, 880], [510, 950], [524, 1020], [547, 1200], [543, 1380], [507, 1510]],
  [[640, 760], [500, 930]],
  [[685, 750], [712, 820], [735, 1025]],
  [[872, 590], [895, 780], [925, 930], [927, 1055], [926, 1145], [1020, 1240], [1085, 1300], [1090, 1400], [1090, 1515]],
  [[1120, 760], [1075, 925]],
  [[150, 1205], [545, 1202], [740, 1190], [915, 1190]],
  [[250, 1145], [257, 1200], [270, 1340], [290, 1505]],
  [[660, 1200], [640, 1480]],
  [[535, 1447], [640, 1490], [710, 1510]],
  [[885, 1210], [805, 1310], [775, 1420], [770, 1512]],
  [[795, 1355], [975, 1398], [1080, 1413]],
  [[778, 1462], [935, 1507]],
  [[1015, 1255], [975, 1398], [945, 1510]],
  [[1025, 1240], [1062, 1090]],
  [[1095, 1300], [1150, 1130]],
  [[1095, 1330], [1140, 1490]],
  [[390, 1020], [346, 1195]],
  [[595, 540], [690, 565], [870, 588], [1150, 612]],
  [[860, 375], [865, 580]],
  [[785, 435], [786, 570]],
];
const bold = ["M725 1030L725 1188", "M535 1030L555 1188", "M590 852L588 1010", "M645 1030L740 1035", "M915 1280L995 1290", "M820 675L870 658M885 675L925 664", "M660 975L660 1010", "M1045 1010L1040 1065", "M1075 1205L1105 1215", "M245 510L262 540L250 585"];
const road = (pts: P[]) => "M" + pts.map((p) => p.join(" ")).join("L");
const blueBars: number[][] = [
  [160, 150, 115, 20], [160, 178, 38, 5], [558, 142, 195, 18], [615, 180, 85, 8], [1115, 186, 40, 9], [148, 186, 7, 33], [1158, 198, 5, 40],
  [108, 297, 34, 6], [110, 485, 32, 6], [108, 676, 30, 7], [107, 864, 28, 8], [105, 1053, 30, 8], [102, 1242, 29, 8], [101, 1431, 28, 8],
  [264, 1518, 9, 23], [453, 1518, 9, 23], [641, 1520, 10, 24], [831, 1523, 9, 24], [1020, 1523, 9, 24], [600, 1509, 84, 9], [1105, 1512, 40, 8],
  [142, 802, 8, 90], [1152, 815, 9, 82], [136, 1467, 6, 33], [1144, 1480, 6, 32],
  [615, 1588, 57, 19], [280, 1635, 155, 6], [280, 1644, 169, 6], [280, 1653, 163, 6], [280, 1661, 143, 6], [280, 1672, 153, 7], [280, 1680, 167, 8], [280, 1688, 103, 9],
  [537, 1635, 42, 7], [510, 1641, 95, 7], [729, 1635, 36, 7], [717, 1642, 60, 7], [543, 1683, 33, 6], [534, 1690, 47, 7], [663, 1680, 30, 8], [654, 1692, 48, 5],
  [720, 1683, 52, 6], [741, 1690, 12, 7], [798, 1683, 33, 6], [789, 1691, 50, 6], [969, 1600, 36, 13], [900, 1632, 173, 8], [918, 1640, 142, 8],
  [966, 1656, 45, 9], [905, 1683, 42, 6], [906, 1691, 40, 6], [1053, 1680, 54, 8], [1041, 1688, 79, 8],
];
const spurs = [
  "M240 1522l15 5-3-12M310 1518l43-10 3 22-42 12zM382 1518l18 3v-10M440 1520l12 2 4-12M580 1530l14 6 8-14-16-12M820 1520l16 8 4-12",
  "M1155 880l28 12-10 24-20-6M1150 1030l12-14 16 18-12 22M1150 1070h14v22l-12 6M122 955l22-14 14 30-22 12zM130 1122l18-4v30l-20-2M127 1160l20-6v28l-12 4",
  "M1130 350h22v-40l14 2M1150 445l8-32 18 4-4 34M1150 500l20-18M1165 525l10-28M1150 680l32 14-4 12-22-8M1150 1235l18 6-8 18M1140 1400l30-14 2 8-24 12M1120 770h36l-4 22",
  "M135 1330l12-2v30l-10-2M175 1515l20 4M960 1520l28 8 6-14M1040 1518l24 5M1145 1275l18 4-8 12",
];
const quay = "M262 412l42-6 2 28-32 42-16-22zM352 400l55-20 6 16-48 16zM425 372l78-28 8 14-74 28zM438 405l42-16 3 12-40 16zM488 388l30-12 4 14-28 14zM530 348l22-4 2 18-20 6zM258 520l26-50 36 14 36-8 28 40M292 500l70-8 4 60-58 26";

const PlanSvg = styled.svg`
  position: absolute;
  left: 673px;
  top: 34px;
  width: 420px;
  height: 590px;
`;
const Plan = () => (
  <PlanSvg viewBox="0 0 1260 1770" fill="none">
    <defs>
      <clipPath id="town"><polygon points={town.map((p) => p.join(",")).join(" ")} /></clipPath>
      <pattern id="hatch" width="7" height="7" patternUnits="userSpaceOnUse"><path d="M0 0h7v7H0z" fill="#d2587e" /><path d="M0 7L7 0" stroke="#8f4660" strokeWidth="1.500" /></pattern>
    </defs>
    <rect x="47" y="28" width="1194" height="1722" stroke="#0a0ac4" strokeWidth="3" />
    <g clipPath="url(#town)">
      <path d={plan.parcel} stroke="#5b8a85" strokeWidth="3" />
      <path d={plan.slate} stroke="#53709a" strokeWidth="2.500" />
      <path d={plan.olive} stroke="#a09d22" strokeWidth="2.500" />
      <path d={plan.yellowBox} stroke="#d8d31d" strokeWidth="3" fill="#222932" />
      <path d={plan.blue} fill="#0505f0" />
      <path d={plan.orange} stroke="#d07010" strokeWidth="3" />
      <path d={plan.cyan} stroke="#0cc3d4" strokeWidth="3" />
      <path d={plan.mintBox} stroke="#5fc49a" strokeWidth="2.500" />
      <path d={plan.mint} fill="#7dffcb" />
      <path d={plan.pale} fill="#9cc2ec" />
      <path d={plan.green} fill="#08c208" />
      <path d={plan.pink} fill="#e0688c" />
      <path d={plan.red} fill="#e01212" />
    </g>
    <path d="M790 340l45-8 4 30-48 2zM1035 280l28-4 3 32-30 2zM540 316l40-6 6 22-30 8zM230 665l22-10 5 44-24 8zM575 1215h72v45h-72zM573 1282h26v64h-26zM578 1362h38v92h-38zM1055 1005h35l-8 36-28-6zM320 785l50-22v22l-40 20zM568 790l26-26 10 8-22 42-18-6zM230 925l22-12 8 20-22 10zM1012 938h20v16h-20zM602 490l20-8 6 18-22 8zM572 540l14-8 4 30-14 8z" fill="url(#hatch)" />
    <path d="M560 1265h84v6h-84zM630 1372h55v4h-55zM560 318h34v4h-34zM1000 1430h70v6h-70zM920 858h50v5h-50zM375 540h54v6h-54zM400 520h46v5h-46zM885 214h40v4h-40zM1000 208h36v4h-36z" fill="#e0688c" />
    <path d={quay} stroke="#79829a" strokeWidth="3" />
    <path d="M420 455l86-32 36 68-96 38z" stroke="#6d7d88" strokeWidth="4" />
    <path d="M452 455l35-18 8 14-36 18z" stroke="#0cc3d4" strokeWidth="3" />
    <path d="M462 485l44-16 18 30-48 20zM508 480l28-6 10 22-26 8z" stroke="#d41616" strokeWidth="3" />
    <g stroke="#0808c8" strokeWidth="2.500"><path d="M512 415l30-18 16 28-30 16zM520 400l36 34M395 485l24-10 8 22-22 10zM395 485l32 12M540 430l28-12 14 24-28 12zM800 1060h38v30h-38zM800 1060l38 30M838 1060l-38 30M858 1090h46v14h-46zM858 1090l46 14M858 1104l46-14" /></g>
    <g fill="#a4bee0"><path d="M420 364h6v6h-6zM385 450h5v5h-5zM360 415h5v5h-5zM410 414h5v5h-5zM525 330h5v5h-5zM510 365h5v5h-5zM566 372h5v5h-5zM330 452h5v5h-5zM512 345h5v5h-5zM340 475h5v5h-5zM440 390h5v5h-5zM540 355h8v8h-8zM470 410h5v5h-5zM375 530h5v5h-5z" /></g>
    <g fill="#0606e0"><path d="M305 440h8v5h-8zM350 430h6v8h-6zM396 428h8v4h-8zM520 398h14v10h-14zM545 414h12v12h-12zM290 460h6v6h-6zM370 500h8v5h-8zM340 520h10v6h-10zM400 482h14v14h-14zM430 500h10v6h-10z" /></g>
    <path d="M565 400l24 40M585 385l26 42M605 372l24 36M625 362l24 36M645 350l22 34M665 342l20 26M360 545l60-22M380 560l-20-40M440 520l10 24M470 512l8 24M570 430l90-50M590 448l90-52" stroke="#5b8a85" strokeWidth="3" />
    <path d="M575 408h8v6h-8zM596 396h8v6h-8zM614 384h9v6h-9zM636 372h9v6h-9zM655 360h8v6h-8zM590 425h8v6h-8zM640 395h8v6h-8z" fill="#0505f0" />
    <path d="M625 388h10v10h-10zM610 410h5v5h-5zM650 382h5v5h-5zM672 372h5v5h-5zM580 442h5v5h-5z" fill="#2ee6d6" />
    <circle cx="415" cy="429" r="8" fill="#1cc8d0" stroke="#e07a10" strokeWidth="4" />
    <circle cx="318" cy="466" r="15" stroke="#8c93a5" strokeWidth="3" /><path d="M307 458h24v12h-24z" fill="#d01a1a" />
    <path d="M307 540l55-8M310 550l58-10M312 562l60-14" stroke="#85831f" strokeWidth="3" />
    {/* survey limit and shoreline */}
    <g stroke="#d90808" strokeWidth="3.500">
      <path d="M158 190L755 196L1155 200L1148 1512L145 1507Z" />
      <path d="M700 232L770 198L830 178L890 176L955 188Q990 165 1025 188Q1050 215 1070 238L1155 246M960 195Q990 172 1015 200L1040 232M1000 220l40 8v28l-26-8M712 240l60-36 50-16" />
      <path d="M64 744L172 702L178 722L130 740L132 762L108 770L104 752L72 770ZM156 510L142 518L132 542L152 572M650 162l6 28M676 162l6 28" />
      <path d="M285 640l36-8 8 36-32 10zM352 660l44-20 26 54-48 16zM470 490l50-16 16 26" />
      <path d="M505 285l34-18 6 24-30 16zM580 290l120-58M325 930l8-12 14 0-8 22z" strokeWidth="3" stroke="#8a1230" />
    </g>
    <g stroke="#d90808" strokeWidth="4"><path d="M600 740h30M595 747h35M935 732h34M928 740h48M1078 284h40v16h-40zM905 225h24v20h-24zM615 315h30v24h-30zM622 322h16v10h-16z" /></g>
    <g fill="#d90808"><path d="M936 1175l16 6-4 10-14-4zM732 1230h6v10h-6zM705 1420h6v10h-6z" /></g>
    <path d="M240 245L250 398M252 245L258 398M646 190l10 60" stroke="#125a7c" strokeWidth="5" />
    <path d="M215 340L292 332L293 358L217 366ZM215 340L293 358M217 366L292 332" stroke="#0b0bd0" strokeWidth="3" />
    <path d="M230 405L228 455M228 420l14 0" stroke="#115a88" strokeWidth="3" />
    <path d="M280 322h46M468 298h40M472 304h34M598 231h52" stroke="#e6e600" strokeWidth="4.500" strokeDasharray="11 2" />
    <path d="M372 268h44M1086 209h46" stroke="#0909c8" strokeWidth="4" />
    {[[267, 191], [456, 194], [159, 303], [267, 303], [456, 303], [642, 191], [894, 188], [267, 492], [246, 288], [246, 244], [252, 378]].map(([x, y]) => <path key={`${x}-${y}`} d={`M${x - 5} ${y}h10M${x} ${y - 5}v10`} stroke="#8aa6cc" strokeWidth="3" />)}
    <path d="M1075 258l60 4 4 30M1080 265l10 20" stroke="#8c93a5" strokeWidth="3" />
    <g stroke="#8aa6cc" strokeWidth="3"><path d="M152 782l50-18 22 50-52 18zM165 778l20 48M180 772l20 50M195 768l18 48M160 800l52-18" /><path d="M268 680l34-8 10 40M325 695l26-30 8 10-20 34" stroke="#7b7f94" /><path d="M728 1310l-18 30-2 80-18 60M612 1330q-4-50 28-50" stroke="#8d92a8" strokeWidth="4" /></g>
    <path d="M415 1240h24v60l-24 6zM420 1260h16v38h-16z" stroke="#18b5d0" strokeWidth="3" />
    <path d="M380 1215l30 42v48M440 1300v20l-40 14" stroke="#b46414" strokeWidth="4" />
    {spurs.map((s, i) => <path key={i} d={s} stroke={i % 2 ? "#a8a828" : "#c8c823"} strokeWidth="3" />)}
    <path d="M1146 1466l28-14 6 20-28 12zM866 1512l20 20 8-20M134 600l20-4 4 16-18 6z" stroke="#4fbf93" strokeWidth="3" />
    {/* street network */}
    <g strokeLinejoin="round" strokeLinecap="butt">
      {streets.map((s, i) => <path key={i} d={road(s)} stroke="#ffff00" strokeWidth={i < 19 ? 31 : 27} />)}
      {blocks.map((s, i) => <path key={i} d={s} stroke="#ffff00" strokeWidth="10.500" />)}
      {streets.map((s, i) => <path key={i} d={road(s)} stroke="#252a33" strokeWidth={i < 19 ? 9.5 : 7} />)}
      {streets.map((s, i) => <path key={i} d={road(s)} stroke={i % 3 ? "#70664a" : "#6d7691"} strokeWidth="2.500" strokeDasharray="17 6" />)}
      {bold.map((s, i) => <path key={i} d={s} stroke="#ffff00" strokeWidth={i > 4 ? 13 : i === 2 ? 13 : 19} />)}
      <path d="M888 1212Q900 1238 930 1235Q955 1225 985 1230Q1005 1245 1000 1290L990 1330" stroke="#ffff00" strokeWidth="10" />
      <path d="M926 1145L950 1178M920 1212L970 1204L1005 1240L1010 1270" stroke="#a05a5a" strokeWidth="4" />
      <path d="M778 386L910 374L908 394L792 432Z" stroke="#ff00ff" strokeWidth="14" fill="#222932" />
    </g>
    <path d="M808 392h34M814 400h22M820 406h14" stroke="#b9b914" strokeWidth="4" />
    <path d="M678 1170l30-16-4 14-20 12z" fill="#14b814" />
    <g fill="#0000ff">{blueBars.map(([x, y, w, h], i) => <rect key={i} x={x} y={y} width={w} height={h} />)}</g>
    <rect x="871" y="1601" width="256" height="125" stroke="#0a0ac4" strokeWidth="3" />
    <g stroke="#ef0000" strokeWidth="4"><path d="M154 1630h58v72h-58zM154 1642h58M154 1654h58M154 1667h58M154 1678h58M154 1690h58M168 1630v72M182 1630v72M197 1630v72M222 1645h47v57h-47zM222 1658h47M222 1672h47M222 1687h47M234 1645v57M250 1645v57" /></g>
    <path d="M147 1692h66v10h-66zM204 1620h6v12h-6zM176 1660h12v14h-12zM222 1646h12v14h-12z" fill="#ef0000" />
  </PlanSvg>
);

/* ---------- drawing area ---------- */

const Canvas = styled.main`
  position: relative;
  height: 715px;
  flex: none;
  background: ${c.dark};
`;
const DocButtons = styled.div`
  position: absolute;
  right: 10px;
  top: 11px;
  display: flex;
  gap: 11px;
`;
const CrossHair = styled.svg`
  position: absolute;
  left: 1527px;
  top: 273px;
  width: 98px;
  height: 98px;
`;
const NavBar = styled.aside`
  position: absolute;
  left: 1863px;
  top: 32px;
  width: 40px;
  height: 294px;
  border-radius: 4px;
  background: #595e62;
  border: 1px solid #656b70;
`;
const Log = styled.div`
  position: absolute;
  left: 464px;
  top: 607px;
  display: flex;
  flex-direction: column;
  align-items: flex-start;
  gap: 6px;
`;
const LogLine = styled.div<{ $c: string }>`
  height: 19px;
  padding: 1px 3px 0 2px;
  border-radius: 2px;
  font: 15px/19px ${mono};
  letter-spacing: -0.03px;
  white-space: pre;
  color: ${(p) => p.$c};
  background: rgba(70, 70, 72, 0.45);
`;
const CommandBar = styled.div`
  position: absolute;
  left: 385px;
  top: 682px;
  width: 1136px;
  height: 32px;
  display: flex;
  align-items: center;
  background: #2a2f3c;
  border-radius: 3px;
`;
const CommandInput = styled.div`
  width: 1064px;
  height: 32px;
  margin-left: auto;
  padding: 0 4px 0 5px;
  display: flex;
  align-items: center;
  border-radius: 2px;
  background: #bcbec0;
  color: #63666a;
  font: italic 15px/32px ${mono};
  letter-spacing: -0.03px;
`;

const Nav = () => (
  <NavBar>
    <Icon w={38} h={292}>
      <g stroke="#42474e" strokeWidth="1.400" fill="#5b606a" strokeLinejoin="round">
        <circle cx="32" cy="5" r="4" strokeWidth="1" /><path d="M30 3l4 4m0-4l-4 4" strokeWidth="1" />
        <path d="M5 27l14-6 14 6-1 15-13 6-13-7zM5 27l14 6 14-6M19 33v15" />
        <path d="M9 38l5 2M24 40l5-2M18 27h4" />
        <path d="M19 56h13v13a13 13 0 1 1-13-13z" /><circle cx="19" cy="69" r="7" /><path d="M14 74l-4 5M24 74l4 5" />
        <path d="M12 135l-8-12 2-3 8 5-3-13 3-1 4 10V109h4l1 12 3-11 3 1-1 12 4-7 2 1-5 16-4 5z" />
        <path d="M5 145l18 18M23 145L5 163" /><path d="M5 151v-6h6zM23 151v-6h-6zM5 157v6h6z" fill="#42474e" />
        <circle cx="24" cy="163" r="6" /><path d="M29 168l5 5" strokeWidth="3" />
        <path d="M16 218v-20h-3l5-7 5 7h-3v20z" /><path d="M15 202c-13 2-14 9 0 10M22 202c14 1 14 8 0 10l-10 1" fill="none" /><path d="M6 211l6-4v8z" fill="#42474e" />
        <path d="M5 243h7v8H5zM15 243h7v8h-7zM25 243h7v8h-7zM5 254h20v17H5z" /><path d="M11 258l8 5-8 5z" fill="#42474e" />
        <circle cx="32" cy="286" r="4" strokeWidth="1" /><path d="M30 286h4" strokeWidth="1" />
      </g>
      <path d="M17 93h6l-3 4zM17 180h6l-3 4zM17 227h6l-3 4z" fill="#3e434a" />
      <path d="M2 103h34M2 237h34" stroke="#6b7075" />
    </Icon>
  </NavBar>
);

/* ---------- layout tabs and status bar ---------- */

const LayoutTabs = styled.div`
  height: 37px;
  display: flex;
  flex: none;
  padding-left: 9px;
`;
const ModelTab = styled.div`
  width: 86px;
  height: 30px;
  padding-left: 21px;
  font-weight: 700;
  line-height: 31px;
  letter-spacing: -0.1px;
  background: ${c.panel};
  clip-path: polygon(11px 0, 100% 0, calc(100% - 12px) 100%, 0 100%);
`;
const LayoutTab = styled.div`
  width: 62px;
  padding-left: 9px;
  line-height: 31px;
  letter-spacing: -0.1px;
`;
const Status = styled.footer`
  height: 30px;
  display: flex;
  flex: none;
  padding-left: 1px;
`;
const Cell = styled.div<{ $w: number; $ml?: number }>`
  width: ${(p) => p.$w}px;
  height: 30px;
  margin-left: ${(p) => p.$ml ?? 3}px;
  display: flex;
  align-items: center;
  flex: none;
  background: ${c.panel};
`;
const Key = styled.div<{ $w: number; $on?: boolean; $ls?: number }>`
  width: ${(p) => p.$w}px;
  height: 28px;
  display: flex;
  align-items: center;
  justify-content: center;
  flex: none;
  font-size: 14.5px;
  letter-spacing: ${(p) => p.$ls ?? 0}px;
  ${(p) => p.$on && css`background: #5e8ec2;`}
`;
const Compass = ({ children }: { children?: React.ReactNode }) => (
  <Icon s={20}><path d="M9 0l3 10 6 10-7-3v-3H7v3l-7 3 6-10z" fill="#f0f0f0" />{children}</Icon>
);

const StatusRow = () => (
  <Status>
    <Cell $w={1191} $ml={0} />
    <Cell $w={60} $ml={4}><Key $w={60} $ls={-0.1}>MODEL</Key></Cell>
    <Cell $w={80}>
      <Key $w={28}><Icon s={20}><path d="M5 0v20M10 0v20M15 0v20M0 5h20M0 10h20M0 15h20" stroke={c.icon} strokeWidth="1.300" /></Icon></Key>
      <Key $w={32}><Icon s={16}>{[0, 4.500, 9, 13.500].map((y) => <path key={y} d={`M0 ${y}h3v2H0zM6 ${y}h3v2H6zM12 ${y}h3v2h-3z`} fill={c.icon} />)}</Icon></Key>
      <Key $w={19}><Caret $w={9} /></Key>
    </Cell>
    <Cell $w={346}>
      <Key $w={31}><Icon s={20}><path d="M1 0v19h19M1 12h6v7" stroke={c.icon} /></Icon></Key>
      <Key $w={28} $on><Icon s={20}><circle cx="9" cy="11" r="8" stroke="#e8e8e8" /><path d="M17 2L9 11h11M14 5q3 3 2 8" stroke="#e8e8e8" strokeWidth="1.300" /></Icon></Key>
      <Key $w={22}><Caret $w={9} /></Key>
      <Key $w={28}><Icon s={20}><path d="M2 2l14 17" stroke="#e0606a" /><path d="M10 0v20" stroke="#6bd38e" /><path d="M8 8h4v4H8z" stroke={c.icon} /></Icon></Key>
      <Key $w={23}><Caret $w={9} /></Key>
      <Key $w={28} $on><Icon s={20}><path d="M16 2L2 17h17" stroke="#eee" /><path d="M7 8h4v4H7z" fill="#fff" /></Icon></Key>
      <Key $w={2} />
      <Key $w={28} $on><Icon s={20}><path d="M3 3h16v16H3z" stroke="#eee" /><path d="M1 1h5v5H1z" fill="#5e8ec2" stroke="#fff" /></Icon></Key>
      <Key $w={22}><Caret $w={9} /></Key>
      <Key $w={3} />
      <Key $w={28} $on><Compass><circle cx="16" cy="4" r="3.500" stroke="#eee" /></Compass></Key>
      <Key $w={31}><Compass><path d="M17 0l-5 6h3l-2 5 6-7h-3z" fill="#f0f0f0" /></Compass></Key>
      <Key $w={29}><Compass /></Key>
      <Key $w={30} $ls={-0.6}>1:1</Key>
      <Caret $w={9} $ml={-1} />
    </Cell>
    <Cell $w={51}>
      <Key $w={29}><Icon s={20} vb="-10 -10 20 20">{[0, 45, 90, 135].map((a) => <path key={a} transform={`rotate(${a})`} d="M-2-10h4v20h-4z" fill={c.icon} />)}<circle r="7" fill={c.icon} /><circle r="3" fill={c.panel} /></Icon></Key>
      <Key $w={22}><Caret $w={9} /></Key>
    </Cell>
    <Cell $w={29} $ml={1}><Key $w={27}><Icon s={20}><path d="M10 0v20M0 10h20" stroke={c.icon} strokeWidth="2.500" /></Icon></Key></Cell>
    <Cell $w={30}><Key $w={30}><Icon s={20}><path d="M.5.5h7v8h-7zM4 20l4-8 4 8z" stroke={c.icon} /><circle cx="16" cy="9" r="4" stroke={c.icon} /></Icon></Key></Cell>
    <Cell $w={34}><Key $w={33}><Icon s={26}><path d="M5 2l10-1q8 1 8 10l-3 9-9-1-7-6z" fill="#3578b8" /><path d="M9 0v13M1 7h14" stroke="#d9eefc" /><circle cx="9" cy="7" r="3" stroke="#fff" /><path d="M1 15h11v8H1z" fill="#f5c64a" /><path d="M10 18l4 6L25 11" stroke="#45ab4d" strokeWidth="4" /></Icon></Key></Cell>
    <Cell $w={61} $ml={4}>
      <Key $w={28}><Icon w={20} h={16}><path d="M.5.5h19v15H.5z" stroke={c.icon} /><path d="M11 3h6v5l-2-2-2 2-1-1 2-2zM9 13H3V9l2 1 2-1 1 1-2 2z" fill={c.icon} /></Icon></Key>
      <Key $w={31}><Icon w={20} h={18}><path d="M0 1h20M0 9h20M0 17h20" stroke={c.icon} strokeWidth="2.200" /></Icon></Key>
    </Cell>
  </Status>
);

/* ---------- properties palette ---------- */

const Palette = styled.aside`
  position: absolute;
  left: 6px;
  top: 63px;
  width: 266px;
  height: 537px;
  display: flex;
  background: ${c.frame};
  border: 1px solid ${c.line};
  border-radius: 3px;
`;
const Rail = styled.div`
  width: 28px;
  display: flex;
  flex-direction: column;
  align-items: center;
  padding: 6px 0 0 0;
`;
const RailTitle = styled.span`
  writing-mode: vertical-rl;
  transform: rotate(180deg);
  margin: 353px 0 14px;
  height: 80px;
  font-size: 14px;
  line-height: 18px;
  letter-spacing: -0.1px;
  color: #c9cbcf;
`;
const Sheetbox = styled.div`
  width: 235px;
  height: 531px;
  margin-top: 3px;
  border: 1px solid #20262f;
  border-radius: 4px;
  background: ${c.panel};
  overflow: hidden;
  display: flex;
`;
const Track = styled.i`
  width: 6px;
  height: 302px;
  margin: 50px 0 0 6px;
  border-radius: 3px;
  background: #272d37;
  flex: none;
`;
const Props = styled.div`
  width: 195px;
  margin-left: 11px;
  padding-top: 15px;
`;
const Picker = styled.div`
  display: flex;
  align-items: center;
  margin-bottom: 5px;
  height: 29px;
`;
const Combo = styled.div`
  width: 105px;
  height: 29px;
  padding: 0 5px 0 4px;
  display: flex;
  align-items: center;
  background: ${c.field};
  border: 1px solid ${c.line};
  letter-spacing: 0.25px;
`;
const Section = styled.section`
  margin-bottom: 4px;
`;
const SectionHead = styled.div`
  width: 193px;
  height: 27px;
  padding: 0 10px 0 9px;
  display: flex;
  align-items: center;
  justify-content: space-between;
  background: ${c.frame};
  font-weight: 700;
  font-size: 13.6px;
  letter-spacing: -0.2px;
`;
const Row = styled.div`
  width: 172px;
  height: 26px;
  margin-left: 21px;
  display: grid;
  grid-template-columns: 72px 1fr;
  border: 1px solid #2e3541;
  border-top: 0;
  line-height: 26px;
`;
const Name = styled.span`
  padding-left: 9px;
  border-right: 1px solid #2e3541;
  color: #d3d5d8;
  font-size: 13.8px;
`;
const Value = styled.span<{ $dim?: boolean }>`
  display: flex;
  align-items: center;
  padding-left: 3px;
  font-size: 13.8px;
  color: ${(p) => (p.$dim ? "#8d939c" : "#f4f4f4")};
`;
type R = { n: string; v: string; dim?: boolean; line?: boolean; chip?: boolean };
const sections: { t: string; rows: R[] }[] = [
  { t: "General", rows: [{ n: "Color", v: "ByLayer", chip: true }, { n: "Layer", v: "Default" }, { n: "Linetype", v: "Cont...", line: true }, { n: "Linety...", v: "1" }, { n: "Linewe...", v: "ByLa...", line: true }, { n: "Transp...", v: "ByLayer" }, { n: "Thickn...", v: "0" }] },
  { t: "3D Visualization", rows: [{ n: "Material", v: "ByLayer" }] },
  { t: "Plot style", rows: [{ n: "Plot st...", v: "ByColor", dim: true }, { n: "Plot st...", v: "None" }, { n: "Plot ta...", v: "Model", dim: true }, { n: "Plot ta...", v: "Not available", dim: true }] },
  { t: "View", rows: [{ n: "Center X", v: "426601.819", dim: true }, { n: "Center Y", v: "4526647.078", dim: true }] },
];
const PropertiesPalette = () => (
  <Palette>
    <Rail>
      <Icon w={12} h={12}><path d="M1 1l10 10M11 1L1 11" stroke="#c4c6c9" strokeWidth="3" /></Icon>
      <Icon w={12} h={11} />
      <Icon w={12} h={13}><path d="M0 0h2v13H0zM9 1v11L3 6.500z" fill="#b5b8bc" /><path d="M10 3v7" stroke="#b5b8bc" strokeWidth="1.500" /></Icon>
      <Icon w={12} h={11} />
      <Icon s={14} vb="-7 -7 14 14">{[0, 45, 90, 135].map((a) => <path key={a} transform={`rotate(${a})`} d="M-1.200-7h2.400v14h-2.400z" fill="#c4c6c9" />)}<circle r="4.800" fill="#c4c6c9" /><circle r="2.300" fill={c.frame} /></Icon>
      <RailTitle>PROPERTIES</RailTitle>
      <Icon w={16} h={20}><path d="M0 0h16v20H0z" fill={c.icon} /><path d="M1.500 1.500h12v8h-12z" fill={c.blue} stroke="#222" /><path d="M2 13h12M2 17h12" stroke="#555" /></Icon>
    </Rail>
    <Sheetbox>
      <Track />
      <Props>
        <Picker>
          <Combo><Fill>No selecti...</Fill><Caret $w={8} /></Combo>
          <Icon s={20} ml={10}><path d="M0 2h11v12H0z" fill={c.blue} /><path d="M6 8h12v12H6z" fill={c.blue} stroke="#3b4453" /><path d="M16 0v9M11.500 4.500h9" stroke="#4dce7c" strokeWidth="2.500" /></Icon>
          <Icon s={20} ml={9}><path d="M.5.500h16v12H.5z" fill="#7fdba0" stroke="#3f9d63" strokeDasharray="2 1" /><Cursor x={12} y={7} /></Icon>
          <Icon s={9} w={9} /><SelectList />
        </Picker>
        {sections.map((s) => (
          <Section key={s.t}>
            <SectionHead>{s.t}<Caret $w={10} /></SectionHead>
            {s.rows.map((r, i) => (
              <Row key={i}>
                <Name>{r.n}</Name>
                <Value $dim={r.dim}>{r.chip && <Swatch $mr={6} />}{r.line && <Stroke $w={42} $ml={1} $mr={5} />}{r.v}</Value>
              </Row>
            ))}
          </Section>
        ))}
      </Props>
    </Sheetbox>
  </Palette>
);

/* ---------- taskbar ---------- */

const Taskbar = styled.div`
  height: 60px;
  display: flex;
  align-items: center;
  background: linear-gradient(90deg, #e2edf6 0, #e1edf8 340px, #d2e1fa 450px, #d7dcf0 540px, #d3e2f9 780px, #dbdfef 980px, #d3dff8 1230px, #d9daec 1400px, #dfe9f7 1540px, #e4eef8 1700px, #e1ecf7 100%);
  color: #1c2026;
`;
const Weather = styled.div`
  width: 548px;
  padding: 1px 0 0 26px;
  display: flex;
  align-items: center;
  gap: 9px;
  line-height: 20px;
  font-size: 14px;
  letter-spacing: -0.1px;
  small { display: block; font-size: 14px; color: #5a6068; }
`;
const App = styled.div`
  width: 55.1px;
  height: 60px;
  padding-top: 15px;
  display: flex;
  flex-direction: column;
  align-items: center;
  flex: none;
`;
const AppActive = styled.div`
  width: 48px;
  height: 48px;
  margin: 0 3px 0 3px;
  padding-top: 8px;
  border-radius: 5px;
  background: #eef0f8;
  box-shadow: 2px 0 0 #e3e6f1;
  display: flex;
  flex-direction: column;
  align-items: center;
`;
const Dot = styled.i<{ $w: number; $c: string; $mt: number }>`
  width: ${(p) => p.$w}px;
  height: 4px;
  margin-top: ${(p) => p.$mt}px;
  border-radius: 2px;
  background: ${(p) => p.$c};
`;
const Tray = styled.div`
  margin-left: auto;
  display: flex;
  align-items: center;
  padding-right: 25px;
`;
const Clock = styled.div`
  width: 89px;
  text-align: right;
  line-height: 20px;
  font-size: 14px;
  letter-spacing: -0.35px;
`;
const Badge = styled.div`
  width: 20px;
  height: 20px;
  margin-left: 10px;
  border-radius: 50%;
  background: #0078d4;
  color: #fff;
  font-size: 13px;
  line-height: 20px;
  text-align: center;
`;
const apps: [React.ReactNode, boolean][] = [
  [<path key="a" d="M0 0h14v14H0zM15.500 0h14v14h-14zM0 15.500h14v14H0zM15.500 15.500h14v14h-14z" fill="url(#win)" />, false],
  [<g key="a"><circle cx="16" cy="12" r="10" stroke="#222" strokeWidth="3" fill="#e6ecf6" /><path d="M9 20l-7 9" stroke="#222" strokeWidth="3.500" /></g>, false],
  [<g key="a"><path d="M1 8h22v21H1z" fill="#292929" /><path d="M9 0h21v21H9z" fill="#f5f5f5" /><path d="M9 8h14v13H9z" fill="#b8b8b8" /></g>, false],
  [<g key="a"><path d="M15 0a14.500 14.500 0 1 1-5 28l-8 1 1-8A14.500 14.500 0 0 1 15 0z" fill="url(#chat)" /><path d="M8 9h10v12H8zM19 13l5-4v12l-5-4z" fill="#fff" /></g>, false],
  [<g key="a"><circle cx="15" cy="15" r="14.500" fill="#1ed760" /><path d="M6 10q10-3 19 2M7 15.500q9-2 16 2M8 20.500q7-2 13 2" stroke="#111" strokeWidth="2.600" strokeLinecap="round" /></g>, false],
  [<g key="a"><path d="M0 2h10l3 3h17v6H0z" fill="#d99a08" /><path d="M0 7h10l3-2h17v24H0z" fill="#fdd04f" /><path d="M5 29v-6q0-2 2-2h16q2 0 2 2v6z" fill="#1470c2" /><path d="M9 25h12" stroke="#0c4d8c" strokeWidth="2" /></g>, true],
  [<g key="a"><path d="M1 12C4 0 24-4 29 10c2 8-4 11-10 10-3 0-3-3-2-5 0-7-12-8-16-3z" fill="url(#edge)" /><path d="M0 16C2 6 14 6 17 13c-5-1-8 3-6 8 2 6 10 8 16 4C18 34 1 30 0 16z" fill="#1b86d8" /><path d="M11 16c-1 7 5 12 16 9-6 7-18 5-19-3 0-3 1-5 3-6z" fill="#0d4f9e" /></g>, false],
  [<g key="a"><path d="M9 6V1h12v5" stroke="#35b5ee" strokeWidth="2" /><path d="M1 6h28v20q0 3-3 3H4q-3 0-3-3z" fill="#17466f" /><path d="M10 11h4.500v5H10z" fill="#f25022" /><path d="M16 11h4.500v5H16z" fill="#7fba00" /><path d="M10 17.500h4.500v5H10z" fill="#00a4ef" /><path d="M16 17.500h4.500v5H16z" fill="#ffb900" /></g>, false],
  [<g key="a"><ellipse cx="15" cy="15" rx="14.500" ry="14.500" fill="#e3122b" /><ellipse cx="15" cy="15" rx="6.500" ry="10.500" fill="#d6e0f5" /></g>, false],
  [<g key="a"><circle cx="15" cy="16" r="13.500" fill="#ff4f4f" /><path d="M17 1c7 4 12 8 12 15a14 14 0 0 1-14 14C4 30 0 20 2 12l4-6 3 5q5-6 8-10z" fill="#ff6a3a" /><path d="M18 0c1 6 9 8 11 16 0 5-2 8-6 10 2-8-3-14-7-15 0-4 0-7 2-11z" fill="#ffd93d" /><circle cx="15" cy="17" r="7" fill="#7a3fe0" /><path d="M5 11q6-2 9 2l-5 2q0 6 8 6-8 5-12-3z" fill="#ff9a3c" /></g>, true],
  [<g key="a"><path d="M22 0l8 4v22l-8 4L8 17l-5 4-3-2 5-4-5-4 3-2 5 4z" fill="#1b84cf" /><path d="M22 8v14l-9-7z" fill="#d3e0f6" /><path d="M22 0l8 4v22l-8 4z" fill="#30a5ee" /></g>, true],
  [<g key="a"><path d="M4 7L18 0l8 3v24l-8 3-13-6 12 1V6L9 8v12l-5 3z" fill="#dc3e15" /><path d="M4 7L18 0v6L9 8v12l-5 3z" fill="#b5261e" /></g>, true],
  [<g key="a"><circle cx="15" cy="15" r="14.500" fill="#e8e8e8" /><path d="M15 15L2.500 7.700A14.500 14.500 0 0 1 27.500 7.700z" fill="#e33b2e" /><path d="M15 15l12.500-7.300A14.500 14.500 0 0 1 14 29.500z" fill="#fbc116" /><path d="M15 15L14 29.500A14.500 14.500 0 0 1 2.500 7.700z" fill="#2da94f" /><circle cx="15" cy="15" r="7" fill="#fff" /><circle cx="15" cy="15" r="5.500" fill="#2c7bf2" /></g>, true],
  [<g key="a"><path d="M20 0c8 1 11 8 7 13-4 4-9 1-10 6s-1 10-7 10C2 29 0 20 3 12 6 4 13-1 20 0z" fill="#2aa9e6" /><circle cx="13" cy="6" r="2.500" fill="#ffc83d" /><circle cx="6" cy="10" r="2.500" fill="#38b449" /><circle cx="4" cy="17" r="2.500" fill="#e8503a" /><circle cx="22" cy="7" r="2.500" fill="#f7a92b" /><path d="M20 10h6v8h-6z" fill="#e6c9a0" /><path d="M21.500 17h3l-.5 13h-2z" fill="#8e5a2f" /></g>, true],
];

const Tasks = () => (
  <Taskbar>
    <Weather>
      <Icon w={30} h={22}>
        <path d="M5 21a6 6 0 0 1 1-12 9 9 0 0 1 17-1 6.500 6.500 0 0 1 1 13z" fill="url(#cloud)" />
        <defs>
          <linearGradient id="cloud" x1="0" y1="0" x2="0" y2="1"><stop stopColor="#9dbbe6" /><stop offset="1" stopColor="#eef3fb" /></linearGradient>
          <linearGradient id="win" x1="0" y1="0" x2="1" y2="1"><stop stopColor="#3fc8fb" /><stop offset="1" stopColor="#0677d2" /></linearGradient>
          <linearGradient id="chat" x1="0" y1="0" x2="0" y2="1"><stop stopColor="#8b6fc0" /><stop offset="1" stopColor="#4a58c8" /></linearGradient>
          <linearGradient id="edge" x1="0" y1="0" x2="1" y2="0"><stop stopColor="#1a8bd0" /><stop offset="1" stopColor="#52d86c" /></linearGradient>
        </defs>
      </Icon>
      <div>17°C<small>Bulutlu</small></div>
    </Weather>
    {apps.map(([g, run], i) => (
      <App key={i}>
        <Icon s={30}>{g}</Icon>
        {run && <Dot $w={8} $c="#7c8290" $mt={5} />}
      </App>
    ))}
    <AppActive>
      <Icon s={32}><path d="M2 2h26l3 3v26H5z" fill="#7d0a2c" /><path d="M1 3l4-2v22l-4 2z" fill="#ee5c83" /><path d="M4 1h25v22H4z" fill="#e51050" /><text x="16.500" y="18" fontSize="18" fontWeight="800" fill="#fff" textAnchor="middle" fontFamily="Open Sans">A</text><text x="17" y="30" fontSize="7.500" fontWeight="800" fill="#fff" textAnchor="middle" fontFamily="Open Sans">CAD</text></Icon>
      <Dot $w={20} $c="#0078d4" $mt={4} />
    </AppActive>
    <Tray>
      <Icon w={16} h={10}><path d="M0 9l8-8 8 8" stroke="#1c2026" strokeWidth="1.500" /></Icon>
      <Icon w={21} h={20} ml={11}><path d="M4 15a5 5 0 0 1 1-9 6 6 0 0 1 11-1 5 5 0 0 1 1 10z" fill="#777" stroke="#333" /><circle cx="14.500" cy="13.500" r="5.800" fill="#d9252f" /><path d="M12.200 11.200l4.600 4.600m0-4.600l-4.600 4.600" stroke="#fff" strokeWidth="1.500" /></Icon>
      <Icon s={20} ml={15}><path d="M1 8q9-9 18 0M4 11q6-6 12 0M7 14q3-3 6 0" stroke="#1c2026" strokeWidth="1.500" /><circle cx="10" cy="17" r="1.500" fill="#1c2026" /></Icon>
      <Icon s={20} ml={10}><path d="M1 7h4l5-4v14l-5-4H1zM12 7q2 3 0 6M14.500 5q4 5 0 10" stroke="#1c2026" strokeWidth="1.300" /><path d="M17 3q5 7 0 14" stroke="#aab" /></Icon>
      <Icon s={20} ml={10}><path d="M5 5h12v12H3v-4" fill="#1c2026" /><path d="M9 7h6v8H7v-3z" fill="#1c2026" stroke="#e1ecf7" strokeWidth=".8" /><path d="M18 9h2v4h-2zM0 3h7v4q0 3-3 3T0 7zM1 0h1.500v3H1zM4.500 0H6v3H4.500z" fill="#1c2026" /></Icon>
      <Clock>00:56<br />21.09.2022</Clock>
      <Badge>1</Badge>
    </Tray>
  </Taskbar>
);

/* ---------- page ---------- */

export default function AutoCad() {
  return (
    <Screen>
      <Global />
      <Desk>
        <Window>
          <Title />
          <MenuBar>
            <MenuTab $w={64} $on>Home</MenuTab>
            {menu.map(([t, w]) => <MenuTab key={t} $w={w}>{t}</MenuTab>)}
            <MiniBox><Caret $up $w={7} $c="#555" /></MiniBox>
            <Caret $w={6} $ml={5} />
          </MenuBar>
          <Ribbon />
          <FileTabs>
            <FileTab>ükada*<Icon s={11} ml={11}><path d="M1 1l9 9M10 1l-9 9" stroke="#a4a8ae" strokeWidth="2.200" /></Icon></FileTab>
            <Icon w={16} h={30} ml={11}><path d="M8 7v16M0 15h16" stroke={c.icon} strokeWidth="2.200" /></Icon>
            <Icon w={9} h={30} ml={13}><path d="M8 5L1 24" stroke="#4c5461" strokeWidth="1.200" /></Icon>
          </FileTabs>
          <Band />
          <Canvas>
            <Plan />
            <CrossHair viewBox="0 0 98 98"><path d="M0 49.500h45M52 49.500h45M48.500 1v45M48.500 53v45" stroke="#d8dadd" /><path d="M45.500 46.500h6v6h-6z" stroke="#fff" fill="none" /></CrossHair>
            <DocButtons>
              <Icon s={14}><path d="M0 10h13v4H0z" fill="#eee" stroke="#111" strokeWidth=".5" /></Icon>
              <Icon s={14}><path d="M3 0h11v11h-2V3H3z" fill="#eee" /><path d="M1.500 5h8v7.500h-8z" stroke="#eee" strokeWidth="2.800" /></Icon>
              <Icon s={14}><path d="M1.500 2l10 10M11.500 2l-10 10" stroke="#eee" strokeWidth="3" /></Icon>
            </DocButtons>
            <Nav />
            <Log>
              <LogLine $c="#585d66">{"Autodesk DWG.  This file is a TrustedDWG last saved by an Autodesk application or Autodesk licensed application."}</LogLine>
              <LogLine $c="#5f646b">Command:</LogLine>
              <LogLine $c="#6c7075">Command:</LogLine>
            </Log>
            <CommandBar>
              <Icon w={7} h={24} ml={4}>{[0, 5, 10, 15, 20].map((y) => <path key={y} d={`M0 ${y}h2.500v2.500H0zM4 ${y}h2.500v2.500H4z`} fill="#c9cbce" />)}</Icon>
              <Icon s={12} ml={8}><path d="M1 0l10 10M11 0L1 10" stroke="#d0d2d4" strokeWidth="2.500" /></Icon>
              <Icon s={20} ml={15}><path d="M2 18L12 8" stroke="#bdbfc2" strokeWidth="4" strokeLinecap="round" /><path d="M10 8q-1-5 4-7h2l-2 4 2 2 4-2q0 7-7 6z" fill="#bdbfc2" /></Icon>
              <CommandInput>
                <Icon w={20} h={16}><path d="M.5.5h19v15H.5z" stroke="#63666a" /><path d="M0 0h20v4H0z" fill="#55585c" /><path d="M2 7l3 2-3 2M6 12h5" stroke="#55585c" /></Icon>
                <Caret $w={9} $ml={3} $c="#55585c" />
                <Icon w={9} h={1} />
                <Fill>Type a command</Fill>
                <Caret $up $w={9} $c="#606367" />
              </CommandInput>
            </CommandBar>
          </Canvas>
          <Band />
          <LayoutTabs>
            <ModelTab>Model</ModelTab>
            <LayoutTab>Layout1</LayoutTab>
            <Icon w={9} h={30} ml={10}><path d="M8 5L1 25" stroke="#4c5461" strokeWidth="1.200" /></Icon>
            <Icon w={16} h={30} ml={12}><path d="M8 7v16M0 15h16" stroke={c.icon} strokeWidth="2.200" /></Icon>
            <Icon w={9} h={30} ml={12}><path d="M8 5L1 25" stroke="#4c5461" strokeWidth="1.200" /></Icon>
          </LayoutTabs>
          <StatusRow />
          <PropertiesPalette />
        </Window>
      </Desk>
      <Tasks />
    </Screen>
  );
}
